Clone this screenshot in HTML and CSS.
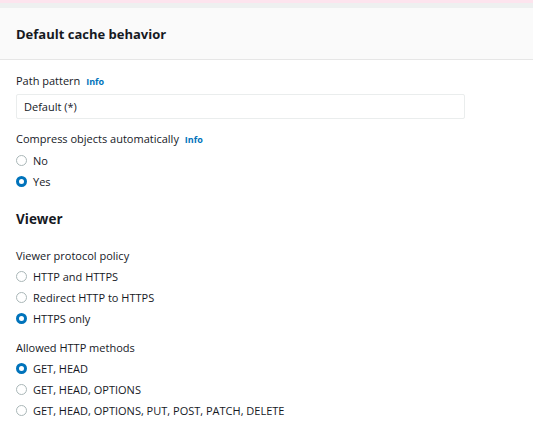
FILE: index.html
```html
<!DOCTYPE html>
<html>
<head>
<meta charset="utf-8">
<link rel="stylesheet" href="styles.css">
</head>
<body>
<div class="strip-pink"></div>
<div class="strip-gray"></div>
<div class="panel">
  <div class="panel-header"><h2>Default cache behavior</h2></div>
  <div class="panel-body">
    <div class="field">
      <div class="label">Path pattern <span class="info">Info</span></div>
      <div class="input">Default (*)</div>
    </div>
    <div class="field field-gap">
      <div class="label label-compress">Compress objects automatically <span class="info">Info</span></div>
      <div class="radio-group">
        <div class="radio"><span class="dot"></span>No</div>
        <div class="radio"><span class="dot checked"></span>Yes</div>
      </div>
    </div>
    <h3 class="section">Viewer</h3>
    <div class="field">
      <div class="label label-radio">Viewer protocol policy</div>
      <div class="radio-group">
        <div class="radio"><span class="dot"></span>HTTP and HTTPS</div>
        <div class="radio"><span class="dot"></span>Redirect HTTP to HTTPS</div>
        <div class="radio"><span class="dot checked"></span>HTTPS only</div>
      </div>
    </div>
    <div class="field field-gap2">
      <div class="label label-radio">Allowed HTTP methods</div>
      <div class="radio-group">
        <div class="radio"><span class="dot checked"></span>GET, HEAD</div>
        <div class="radio"><span class="dot"></span>GET, HEAD, OPTIONS</div>
        <div class="radio"><span class="dot"></span>GET, HEAD, OPTIONS, PUT, POST, PATCH, DELETE</div>
      </div>
    </div>
  </div>
</div>
</body>
</html>
```
FILE: styles.css
```css
* { box-sizing: border-box; }
html, body { margin: 0; padding: 0; background: #ffffff; }
body {
  font-family: "Open Sans", "Noto Sans", sans-serif;
  font-size: 11px;
  color: #16191f;
  width: 533px;
  height: 430px;
  overflow: hidden;
}
.strip-pink { height: 3px; background: #fde4ee; }
.strip-gray { height: 5px; background: #eef0f0; }
.panel-header {
  height: 52px;
  background: #fafafa;
  border-bottom: 1px solid #e6e6e6;
  display: flex;
  align-items: center;
  padding-left: 16px;
}
.panel-header h2 {
  margin: 0;
  font-size: 13px;
  font-weight: 700;
  color: #16191f;
}
.panel-body { padding: 13px 16px 0 16px; }
.label {
  line-height: 16px;
  height: 16px;
  margin-bottom: 5px;
}
.label-compress { margin-bottom: 3px; }
.label-radio { margin-bottom: 2px; }
.info {
  color: #0073bb;
  font-weight: 700;
  font-size: 9px;
  margin-left: 3px;
}
.input {
  width: 449px;
  height: 25px;
  border: 1px solid #eaeded;
  border-radius: 2px;
  padding-left: 7px;
  display: flex;
  align-items: center;
  color: #16191f;
}
.field-gap { margin-top: 12px; }
.radio-group { display: flex; flex-direction: column; }
.radio {
  height: 21px;
  display: flex;
  align-items: center;
  gap: 6px;
}
.dot {
  width: 11px;
  height: 11px;
  border-radius: 50%;
  border: 1px solid #aab7b8;
  background: #fff;
  flex: none;
}
.dot.checked {
  border: 3.5px solid #0073bb;
}
.section {
  margin: 17px 0 19px 0;
  font-size: 13.5px;
  font-weight: 700;
  line-height: 20px;
}
.field-gap2 { margin-top: 11px; }
```
